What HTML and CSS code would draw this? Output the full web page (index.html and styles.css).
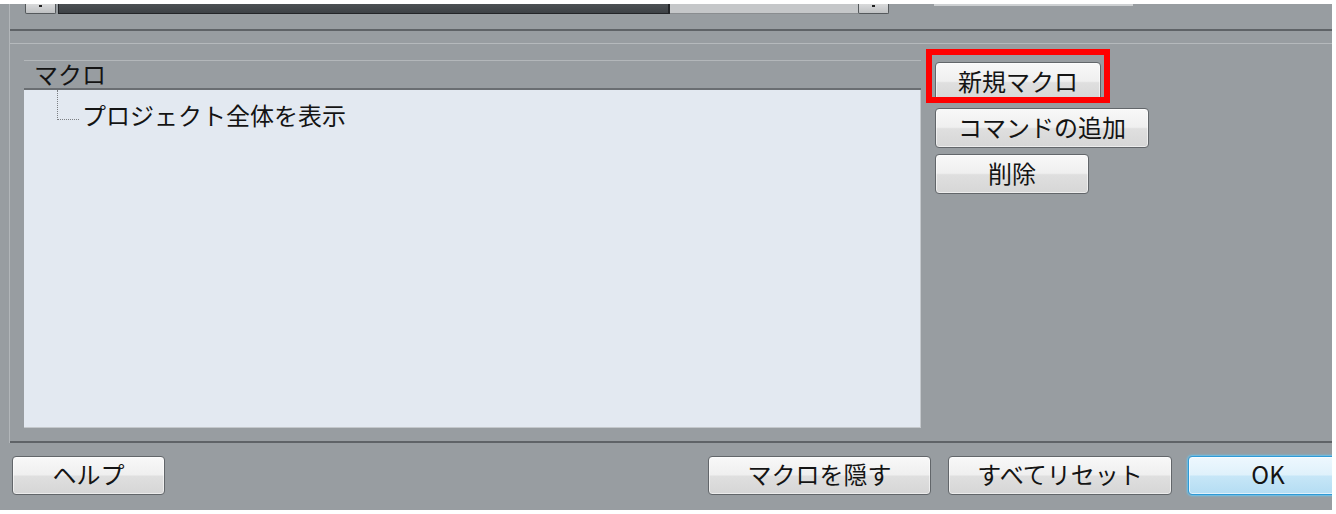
FILE: index.html
```html
<!DOCTYPE html>
<html lang="ja">
<head>
<meta charset="utf-8">
<title>マクロ</title>
<link rel="stylesheet" href="styles.css">
</head>
<body>
<div class="dialog">
  <div class="main">
    <div class="top">
      <div class="scroll">
        <div class="sb-btn"><span class="arr"></span></div>
        <div class="sb-track"></div>
        <div class="sb-rest"></div>
        <div class="sb-btn"><span class="arr"></span></div>
        <div class="top-ctrl"></div>
      </div>
    </div>
    <div class="group">
      <div class="list">
        <div class="list-head">マクロ</div>
        <div class="list-body">
          <div class="tree-row">
            <span class="conn"></span>
            <span class="label">プロジェクト全体を表示</span>
          </div>
        </div>
      </div>
      <div class="side">
        <div class="hl"><button class="btn b-new">新規マクロ</button></div>
        <button class="btn b-add">コマンドの追加</button>
        <button class="btn b-del">削除</button>
      </div>
    </div>
  </div>
  <div class="footer">
    <button class="btn f-help">ヘルプ</button>
    <div class="spacer"></div>
    <button class="btn f-hide">マクロを隠す</button>
    <button class="btn f-reset">すべてリセット</button>
    <button class="btn f-ok">OK</button>
  </div>
</div>
</body>
</html>
```
FILE: styles.css
```css
html, body {
  margin: 0;
  padding: 0;
  background: #ffffff;
}
body {
  font-family: "Noto Sans CJK JP", "Noto Sans", sans-serif;
  color: #141414;
}
.dialog {
  margin-top: 4px;
  width: 1332px;
  height: 506px;
  background: #989da1;
  overflow: hidden;
  display: flex;
  flex-direction: column;
}
.main {
  margin-left: 9px;
  border-left: 1px solid #b2b6b9;
  display: flex;
  flex-direction: column;
}
.top {
  height: 25px;
  padding-left: 15px;
  border-bottom: 2px solid #5f6367;
  margin-bottom: 12px;
}
.scroll {
  display: flex;
  height: 10px;
}
.sb-btn {
  box-sizing: border-box;
  width: 31px;
  height: 10px;
  background: linear-gradient(#d9dadb, #bfc1c3);
  border: 1px solid #55595c;
  border-top: none;
  border-radius: 0 0 2px 2px;
  display: flex;
  justify-content: center;
}
.arr {
  width: 3px;
  height: 2px;
  margin-top: 1px;
  background: #222;
}
.sb-track {
  box-sizing: border-box;
  width: 612px;
  height: 10px;
  margin-left: 2px;
  background: linear-gradient(#4c5054, #3e4246);
  border: 1px solid #232528;
  border-top: none;
  border-right-width: 2px;
}
.sb-rest {
  box-sizing: border-box;
  width: 188px;
  height: 10px;
  background: #c5c7c9;
  border-bottom: 1px solid #8a8d90;
}
.top-ctrl {
  width: 199px;
  height: 2px;
  margin-left: 45px;
  background: #cdd0d2;
}
.group {
  display: flex;
  align-items: flex-start;
  border-top: 1px solid #b5b9bc;
  border-bottom: 2px solid #5f6367;
  padding: 16px 0 13px 14px;
}
.list {
  width: 897px;
  height: 368px;
  display: flex;
  flex-direction: column;
}
.list-head {
  box-sizing: border-box;
  height: 30px;
  line-height: 25px;
  padding: 0 0 2px 10px;
  font-size: 24px;
  border-top: 1px solid #b3b7ba;
  border-bottom: 2px solid #6a6e72;
  background: #989da1;
}
.list-body {
  flex: 1;
  background: #e3e9f1;
  border-right: 1px solid #c4c8cc;
  border-bottom: 1px solid #c4c8cc;
}
.tree-row {
  display: flex;
  align-items: flex-start;
  margin-left: 33px;
}
.conn {
  box-sizing: border-box;
  width: 22px;
  height: 30px;
  border-left: 1px dotted #7c7f83;
  border-bottom: 1px dotted #7c7f83;
}
.label {
  margin-left: 3px;
  margin-top: 10px;
  font-size: 24px;
  line-height: 30px;
  white-space: nowrap;
}
.side {
  margin-left: 14px;
  padding-top: 2px;
  display: flex;
  flex-direction: column;
  align-items: flex-start;
  gap: 6px;
}
.btn {
  box-sizing: border-box;
  height: 40px;
  padding: 0 0 3px 0;
  font-family: "Noto Sans CJK JP", "Noto Sans", sans-serif;
  font-size: 24px;
  line-height: 32px;
  color: #141414;
  border: 1px solid #62666a;
  border-radius: 4px;
  background: linear-gradient(#f8f8f8 0%, #efefef 48%, #dfdfdf 52%, #d6d6d6 100%);
  box-shadow: inset 0 0 0 1px rgba(255, 255, 255, 0.55);
  text-align: center;
}
.hl {
  position: relative;
}
.hl::after {
  content: "";
  position: absolute;
  left: -9px;
  right: -9px;
  top: -13px;
  bottom: -1px;
  border: 6px solid #ff0000;
  pointer-events: none;
}
.b-new { width: 166px; display: block; }
.b-add { width: 214px; }
.b-del { width: 154px; }
.footer {
  flex: 1;
  display: flex;
  align-items: flex-start;
  padding: 13px 0 0 12px;
}
.footer .btn {
  height: 39px;
  flex: none;
}
.spacer { flex: 1; }
.f-help { width: 153px; }
.f-hide { width: 223px; }
.f-reset { width: 224px; margin-left: 17px; }
.f-ok {
  width: 160px;
  margin-left: 16px;
  margin-right: -16px;
  border: 1px solid #2f9ad6;
  background: linear-gradient(#eef8fe 0%, #dff1fb 48%, #c6e6f7 52%, #b4ddf3 100%);
  box-shadow: 0 0 2px 1px #66c4f0, inset 0 0 0 1px rgba(255, 255, 255, 0.6);
}
```
